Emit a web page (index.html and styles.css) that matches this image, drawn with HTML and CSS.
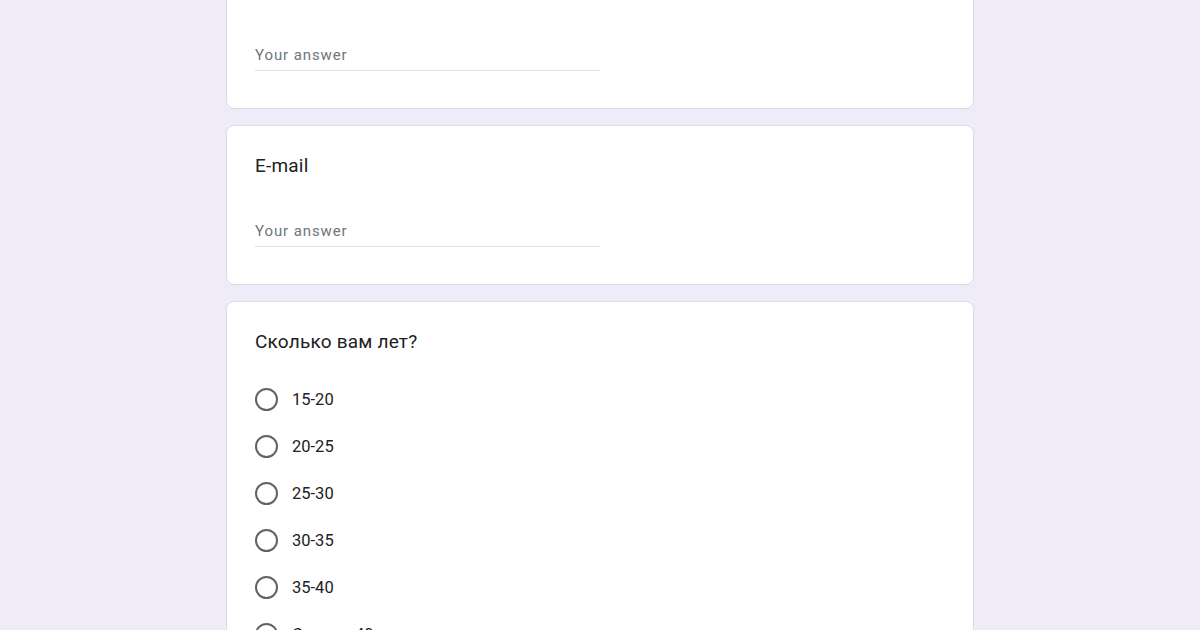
FILE: index.html
```html
<!DOCTYPE html>
<html lang="ru">
<head>
<meta charset="utf-8">
<title>Форма</title>
<link rel="stylesheet" href="styles.css">
</head>
<body>
<div class="form">
  <div class="card">
    <div class="q-title">Ваше имя и фамилия</div>
    <div class="answer"><span class="placeholder">Your answer</span></div>
  </div>
  <div class="card">
    <div class="q-title">E-mail</div>
    <div class="answer"><span class="placeholder">Your answer</span></div>
  </div>
  <div class="card">
    <div class="q-title">Сколько вам лет?</div>
    <div class="options">
      <div class="option"><span class="radio"></span><span class="label">15-20</span></div>
      <div class="option"><span class="radio"></span><span class="label">20-25</span></div>
      <div class="option"><span class="radio"></span><span class="label">25-30</span></div>
      <div class="option"><span class="radio"></span><span class="label">30-35</span></div>
      <div class="option"><span class="radio"></span><span class="label">35-40</span></div>
      <div class="option"><span class="radio"></span><span class="label">Старше 40</span></div>
    </div>
  </div>
</div>
</body>
</html>
```

FILE: styles.css
```css
html, body {
  margin: 0;
  padding: 0;
  background: #f0ebf8;
  height: 100%;
  overflow: hidden;
}
body {
  font-family: Roboto, "Noto Sans", Arial, sans-serif;
  color: #202124;
}
.form {
  width: 748px;
  margin: -51px auto 0;
  display: flex;
  flex-direction: column;
  gap: 16px;
}
.card {
  background: #fff;
  border: 1px solid #dadce0;
  border-radius: 8px;
  padding: 28px 28px 37px;
}
.q-title {
  font-size: 19px;
  line-height: 24px;
  letter-spacing: 0.2px;
  color: #202124;
}
.answer {
  width: 345px;
  margin-top: 42px;
  padding-bottom: 4px;
  border-bottom: 1px solid #e0e0e0;
  line-height: 22px;
}
.placeholder {
  font-size: 15px;
  letter-spacing: 0.9px;
  color: #70757a;
}
.options {
  margin-top: 33px;
  display: flex;
  flex-direction: column;
  gap: 23px;
}
.option {
  display: flex;
  align-items: center;
  height: 24px;
}
.radio {
  width: 19px;
  height: 19px;
  border: 2px solid #5f6368;
  border-radius: 50%;
  flex: none;
  margin-right: 14px;
}
.label {
  font-size: 16.5px;
  color: #202124;
}
```
